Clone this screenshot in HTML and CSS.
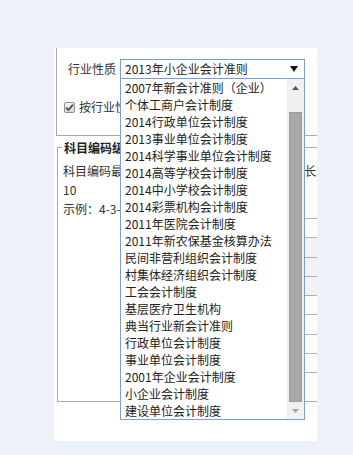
FILE: index.html
```html
<!DOCTYPE html>
<html lang="zh-CN">
<head>
    <meta charset="UTF-8">
    <meta name="viewport" content="width=device-width, initial-scale=1.0">
    <title>账套设置</title>
    <link rel="stylesheet" href="styles.css">
</head>
<body>
    <div class="panel">
        <div class="top-box">
            <div class="field-row">
                <span class="field-label">行业性质</span>
                <div class="select">
                    <span class="select-value">2013年小企业会计准则</span>
                    <svg class="select-arrow" width="8" height="6" viewBox="0 0 8 6"><path d="M0 0H8L4 6Z" fill="#111"/></svg>

                    <!-- 展开的下拉列表 -->
                    <div class="dropdown">
                        <div class="options">
                            <div class="option">2007年新会计准则（企业）</div>
                            <div class="option">个体工商户会计制度</div>
                            <div class="option">2014行政单位会计制度</div>
                            <div class="option">2013事业单位会计制度</div>
                            <div class="option">2014科学事业单位会计制度</div>
                            <div class="option">2014高等学校会计制度</div>
                            <div class="option">2014中小学校会计制度</div>
                            <div class="option">2014彩票机构会计制度</div>
                            <div class="option">2011年医院会计制度</div>
                            <div class="option">2011年新农保基金核算办法</div>
                            <div class="option">民间非营利组织会计制度</div>
                            <div class="option">村集体经济组织会计制度</div>
                            <div class="option">工会会计制度</div>
                            <div class="option">基层医疗卫生机构</div>
                            <div class="option">典当行业新会计准则</div>
                            <div class="option">行政单位会计制度</div>
                            <div class="option">事业单位会计制度</div>
                            <div class="option">2001年企业会计制度</div>
                            <div class="option">小企业会计制度</div>
                            <div class="option">建设单位会计制度</div>
                        </div>
                        <div class="scrollbar">
                            <div class="scroll-btn">
                                <svg width="7" height="4" viewBox="0 0 7 4"><path d="M0 4H7L3.5 0Z" fill="#505050"/></svg>
                            </div>
                            <div class="scroll-track">
                                <div class="scroll-thumb"></div>
                            </div>
                            <div class="scroll-btn">
                                <svg width="7" height="4" viewBox="0 0 7 4"><path d="M0 0H7L3.5 4Z" fill="#a3a3a3"/></svg>
                            </div>
                        </div>
                    </div>
                </div>
            </div>
            <div class="check-row">
                <span class="checkbox">
                    <svg width="9" height="9" viewBox="0 0 9 9"><path d="M1 4.6L3.4 7L8 1.6" fill="none" stroke="#4a4a4a" stroke-width="1.8"/></svg>
                </span>
                <span>按行业性质预置会计科目</span>
            </div>
        </div>

        <fieldset class="code-box">
            <legend>科目编码级次设置</legend>
            <div class="code-text">科目编码最多可设置10级，每级编码的最大总长度为</div>
            <div class="code-text">10</div>
            <div class="code-text">示例：4-3-3-3-3-3</div>
            <div class="level-grid">
                <div class="level-row"></div>
                <div class="level-row alt"></div>
                <div class="level-row alt"></div>
                <div class="level-row alt"></div>
                <div class="level-row"></div>
                <div class="level-row"></div>
                <div class="level-row"></div>
                <div class="level-row"></div>
            </div>
        </fieldset>
    </div>
</body>
</html>
```

FILE: styles.css
```css
body {
    margin: 0;
    padding: 48px 0 0 54px;
    height: 455px;
    box-sizing: border-box;
    overflow: hidden;
    background-color: #edf1f9;
    font-family: 'Noto Sans CJK SC', 'Liberation Sans', sans-serif;
    font-size: 12px;
    color: #222;
}

.panel {
    width: 263px;
    height: 393px;
    padding-left: 2px;
    box-sizing: border-box;
    background-color: #ffffff;
    overflow: hidden;
}

.top-box {
    width: 400px;
    height: 88px;
    padding-top: 11px;
    box-sizing: border-box;
    border-left: 1px solid #a9a9a9;
    border-bottom: 1px solid #a9a9a9;
}

.field-row {
    display: flex;
    align-items: center;
    padding-left: 11px;
}

.field-label {
    width: 48px;
    margin-right: 4px;
    line-height: 20px;
    color: #333;
}

.select {
    position: relative;
    width: 185px;
    height: 20px;
    box-sizing: border-box;
    border: 1px solid #7b9ed6;
    display: flex;
    align-items: center;
    justify-content: space-between;
    padding: 0 6px 0 4px;
    background: #fff;
}

.select-value {
    line-height: 18px;
}

.dropdown {
    position: absolute;
    top: 19px;
    left: -1px;
    width: 185px;
    height: 341px;
    box-sizing: border-box;
    border: 1px solid #7b9ed6;
    border-top: none;
    background: #fff;
    display: flex;
    z-index: 10;
}

.options {
    flex: 1;
    overflow: hidden;
}

.option {
    height: 17px;
    line-height: 17px;
    padding-left: 4px;
    white-space: nowrap;
}

.scrollbar {
    width: 17px;
    display: flex;
    flex-direction: column;
    background: #f0f0f0;
}

.scroll-btn {
    height: 17px;
    display: flex;
    align-items: center;
    justify-content: center;
}

.scroll-track {
    flex: 1;
    display: flex;
    flex-direction: column;
    padding: 16px 2px 0 2px;
}

.scroll-thumb {
    flex: 1;
    background: #a8a8a8;
    border: 1px solid #9b9b9b;
}

.check-row {
    display: flex;
    align-items: center;
    gap: 4px;
    margin-top: 20px;
    padding-left: 7px;
    line-height: 16px;
    color: #333;
}

.checkbox {
    width: 11px;
    height: 11px;
    box-sizing: border-box;
    border: 1px solid #8f8f8f;
    border-radius: 2px;
    background: linear-gradient(#f6f6f6, #d8d8d8);
    display: flex;
    align-items: center;
    justify-content: center;
}

.code-box {
    width: 400px;
    height: 262px;
    box-sizing: border-box;
    margin: 4px 0 0 1px;
    padding: 6px 0 0 5px;
    border: 1px solid #a9a9a9;
}

.code-box legend {
    padding: 0 2px;
    margin-left: -1px;
    font-weight: bold;
    line-height: 15px;
    color: #222;
}

.code-text {
    line-height: 19px;
    white-space: nowrap;
    color: #333;
}

.level-grid {
    margin-left: 70px;
    width: 320px;
    border-top: 1px solid #b0b0b0;
}

.level-row {
    height: 19.25px;
    box-sizing: border-box;
    border-bottom: 1px solid #b0b0b0;
}

.level-row.alt {
    background: #f3f3f3;
}
```
